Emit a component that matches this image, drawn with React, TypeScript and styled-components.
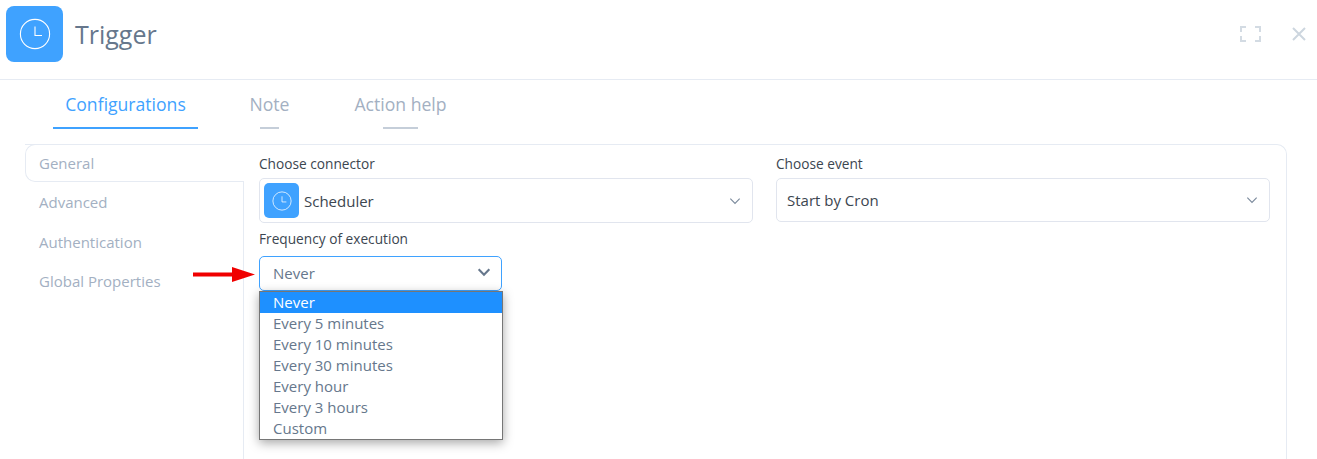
import { createGlobalStyle, styled } from "styled-components";

const GlobalStyle = createGlobalStyle`
  html, body {
    margin: 0;
    height: 459px;
    overflow: hidden;
    background: #fff;
    font-family: "Open Sans", "Noto Sans", sans-serif;
  }
  * { box-sizing: border-box; }
`;

const Header = styled.header`
  height: 80px;
  padding: 6px 20px 0 6px;
  display: flex;
  align-items: flex-start;
  border-bottom: 1px solid #e6ebf3;
`;

const IconTile = styled.div<{ $width: number; $height: number; $radius: number }>`
  width: ${(p) => p.$width}px;
  height: ${(p) => p.$height}px;
  border-radius: ${(p) => p.$radius}px;
  background: #3fa2ff;
  display: flex;
  align-items: center;
  justify-content: center;
  flex-shrink: 0;
`;

const Title = styled.h1`
  margin: 7px 0 0 12px;
  font-size: 25px;
  line-height: 42px;
  font-weight: 400;
  color: #66778c;
  flex: 1;
`;

const HeaderActions = styled.div`
  display: flex;
  align-items: center;
  gap: 31px;
  margin: 20px -9px 0 0;
`;

const Tabs = styled.nav`
  height: 50px;
  padding-left: 53px;
  padding-top: 9px;
  display: flex;
`;

const Tab = styled.div<{ $active?: boolean; $width: number; $mr: number; $bar: number }>`
  width: ${(p) => p.$width}px;
  margin-right: ${(p) => p.$mr}px;
  display: flex;
  flex-direction: column;
  align-items: center;
  height: 41px;
  font-size: 17.6px;
  line-height: 30px;
  white-space: nowrap;
  color: ${(p) => (p.$active ? "#3fa2ff" : "#a3b0c2")};
  &::after {
    content: "";
    margin-top: 8px;
    width: ${(p) => p.$bar}px;
    height: 2px;
    background: ${(p) => (p.$active ? "#3fa2ff" : "#c5ced9")};
  }
`;

const Panel = styled.div`
  margin: 14px 30px 0 25px;
  height: 330px;
  border-top: 1px solid #e6ebf3;
  border-right: 1px solid #e6ebf3;
  border-top-right-radius: 10px;
  display: flex;
`;

const Side = styled.aside`
  width: 219px;
  flex-shrink: 0;
  margin-top: -1px;
`;

const SideItem = styled.div<{ $active?: boolean; $height: number }>`
  height: ${(p) => p.$height}px;
  padding-left: ${(p) => (p.$active ? 13 : 14)}px;
  display: flex;
  align-items: center;
  font-size: 15px;
  color: #a3b0c2;
  border: ${(p) => (p.$active ? "1px solid #e6ebf3" : "none")};
  border-right: none;
  border-radius: ${(p) => (p.$active ? "10px 0 0 10px" : "0")};
`;

const Content = styled.div`
  flex: 1;
  padding: 0 16px 0 15px;
  position: relative;
  &::before {
    content: "";
    position: absolute;
    left: -1px;
    top: 36px;
    bottom: 0;
    border-left: 1px solid #e6ebf3;
  }
`;

const Row = styled.div`
  display: flex;
  gap: 23px;
  align-items: flex-start;
`;

const Field = styled.div<{ $relative?: boolean }>`
  width: 494px;
  position: ${(p) => (p.$relative ? "relative" : "static")};
`;

const Label = styled.div<{ $top: number; $height: number }>`
  padding-top: ${(p) => p.$top}px;
  height: ${(p) => p.$height}px;
  font-size: 13.7px;
  line-height: 19px;
  color: #3c4650;
`;

const SelectBox = styled.div<{ $height: number; $lift?: number }>`
  height: ${(p) => p.$height}px;
  border: 1px solid #e1e5ee;
  border-radius: 5px;
  display: flex;
  align-items: center;
  padding: 0 10px ${(p) => p.$lift ?? 0}px 4px;
  font-size: 15px;
  color: #3c4650;
`;

const SelectText = styled.span<{ $left: number }>`
  flex: 1;
  margin-left: ${(p) => p.$left}px;
`;

const OpenSelect = styled.div`
  width: 243px;
  height: 35px;
  border: 1px solid #3fa2ff;
  border-radius: 5px;
  display: flex;
  align-items: center;
  justify-content: space-between;
  padding: 0 9px 2px 13px;
  font-size: 15px;
  color: #66778c;
  svg {
    margin-bottom: 2px;
  }
`;

const Menu = styled.ul`
  position: absolute;
  left: 0;
  top: 68px;
  width: 244px;
  margin: 0;
  padding: 0;
  list-style: none;
  background: #fff;
  border: 1px solid #767676;
  box-shadow: 0 3px 10px rgba(0, 0, 0, 0.35);
`;

const MenuItem = styled.li<{ $selected?: boolean }>`
  height: 21px;
  padding-left: 13px;
  font-size: 15px;
  line-height: 21px;
  color: ${(p) => (p.$selected ? "#fff" : "#66778c")};
  background: ${(p) => (p.$selected ? "#1e90ff" : "transparent")};
`;

const Pointer = styled.svg`
  position: absolute;
  left: -66px;
  top: 44px;
`;

function ClockIcon({ size, stroke }: { size: number; stroke: number }) {
  return (
    <svg width={size} height={size} viewBox="0 0 32 32" fill="none" stroke="#fff" strokeWidth={stroke}>
      <circle cx="16" cy="16" r="14.6" />
      <path d="M16 8.5V17.5H23" />
    </svg>
  );
}

function Chevron({ size, width, color }: { size: number; width: number; color: string }) {
  return (
    <svg width={size} height={size} viewBox="0 0 12 12" fill="none" stroke={color} strokeWidth={width}>
      <path d="M2 4L6 8L10 4" />
    </svg>
  );
}

const frequencies = [
  "Never",
  "Every 5 minutes",
  "Every 10 minutes",
  "Every 30 minutes",
  "Every hour",
  "Every 3 hours",
  "Custom",
];

export default function App() {
  return (
    <>
      <GlobalStyle />
      <Header>
        <IconTile $width={57} $height={56} $radius={8}>
          <ClockIcon size={32} stroke={1.1} />
        </IconTile>
        <Title>Trigger</Title>
        <HeaderActions>
          <svg width="21" height="16" viewBox="0 0 21 16" fill="none" stroke="#d3dbe3" strokeWidth="2">
            <path d="M6 1H1V6M1 10V15H6M15 1H20V6M20 10V15H15" />
          </svg>
          <svg width="14" height="14" viewBox="0 0 14 14" fill="none" stroke="#cdd6df" strokeWidth="2">
            <path d="M1 1L13 13M13 1L1 13" />
          </svg>
        </HeaderActions>
      </Header>
      <Tabs>
        <Tab $active $width={145} $mr={62} $bar={145}>Configurations</Tab>
        <Tab $width={19} $mr={104} $bar={19}>Note</Tab>
        <Tab $width={35} $mr={0} $bar={35}>Action help</Tab>
      </Tabs>
      <Panel>
        <Side>
          <SideItem $active $height={38}>General</SideItem>
          <SideItem $height={40}>Advanced</SideItem>
          <SideItem $height={40}>Authentication</SideItem>
          <SideItem $height={38}>Global Properties</SideItem>
        </Side>
        <Content>
          <Row>
            <Field>
              <Label $top={9} $height={33}>Choose connector</Label>
              <SelectBox $height={45}>
                <IconTile $width={35} $height={35} $radius={5}>
                  <ClockIcon size={20} stroke={1.2} />
                </IconTile>
                <SelectText $left={5}>Scheduler</SelectText>
                <Chevron size={14} width={1} color="#7b8a9c" />
              </SelectBox>
            </Field>
            <Field>
              <Label $top={9} $height={33}>Choose event</Label>
              <SelectBox $height={44} $lift={1}>
                <SelectText $left={6}>Start by Cron</SelectText>
                <Chevron size={14} width={1} color="#7b8a9c" />
              </SelectBox>
            </Field>
          </Row>
          <Field $relative>
            <Label $top={6} $height={33}>Frequency of execution</Label>
            <Pointer width="62" height="15" viewBox="0 0 62 15">
              <path d="M0 5.5H39V0L62 7.5L39 15V9.5H0Z" fill="#f00000" />
            </Pointer>
            <OpenSelect>
              Never
              <Chevron size={16} width={1.6} color="#66778c" />
            </OpenSelect>
            <Menu>
              {frequencies.map((f, i) => (
                <MenuItem key={f} $selected={i === 0}>{f}</MenuItem>
              ))}
            </Menu>
          </Field>
        </Content>
      </Panel>
    </>
  );
}
